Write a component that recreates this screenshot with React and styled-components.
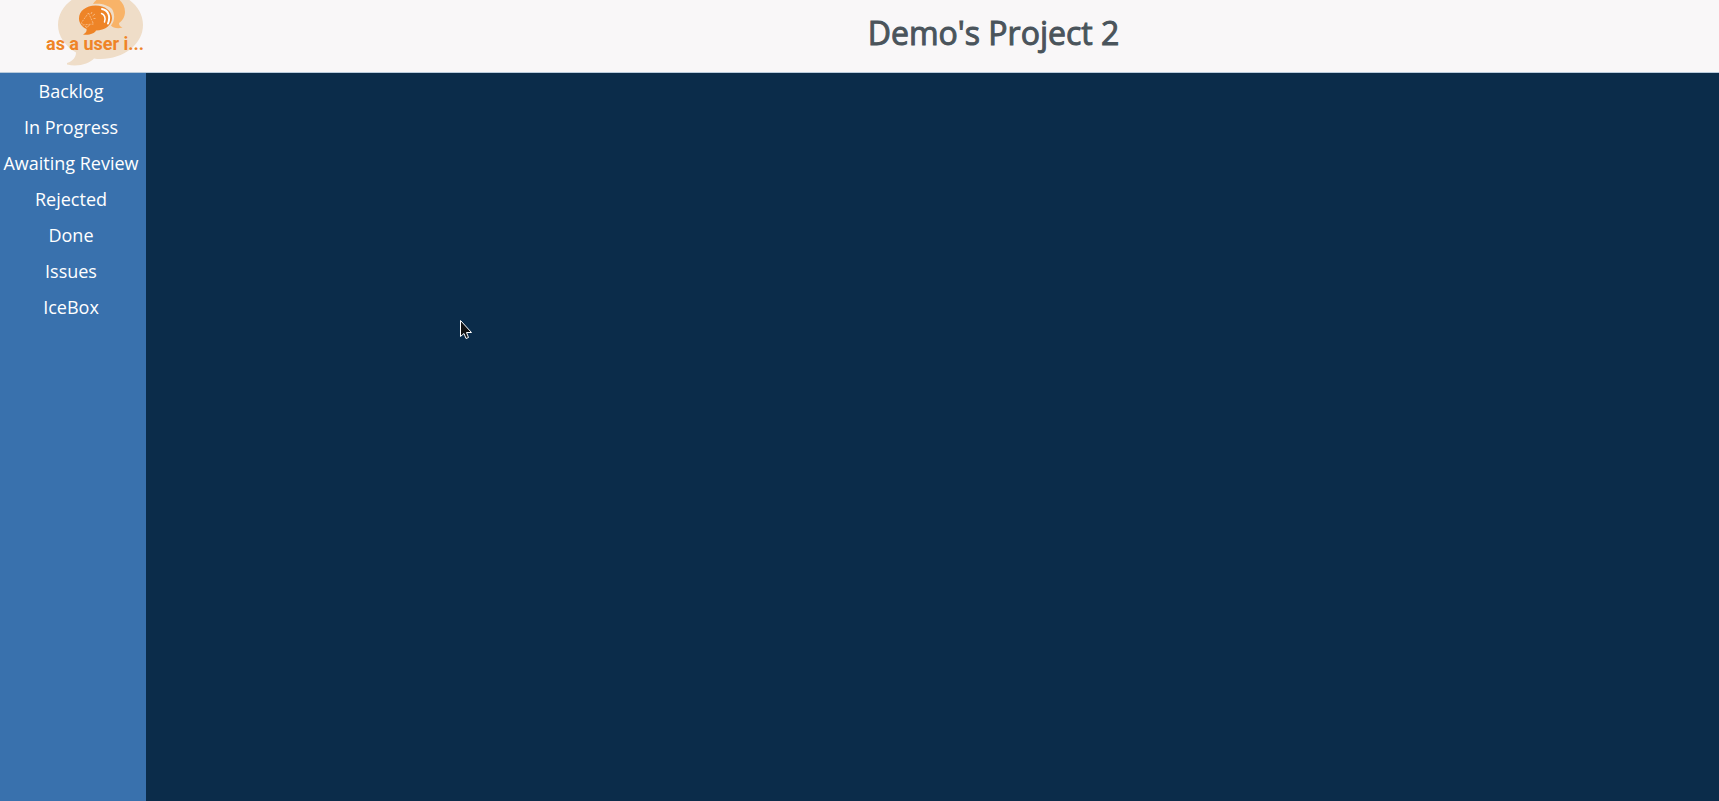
import React from "react";
import styled, { createGlobalStyle } from "styled-components";

const GlobalStyle = createGlobalStyle`
  * { box-sizing: border-box; }
  body { margin: 0; font-family: "Open Sans", sans-serif; }
`;

const Page = styled.div`
  position: relative;
  min-height: 100vh;
  display: flex;
  flex-direction: column;
  background: #0b2c4a;
`;

const Header = styled.header`
  display: flex;
  height: 73px;
  background: #f9f7f8;
  border-bottom: 1px solid #b9cbdc;
`;

const Brand = styled.a`
  flex: 0 0 268px;
  padding-left: 40px;
`;

const LogoSvg = styled.svg`
  display: block;
`;

const Wordmark = styled.text`
  font-family: Roboto, sans-serif;
  font-size: 18px;
  font-weight: 700;
  fill: #ef8427;
`;

const Title = styled.h1`
  flex: 1;
  margin: 0;
  text-align: center;
  color: #4a545b;
  font-size: 32px;
  font-weight: 400;
  line-height: 66px;
  -webkit-text-stroke: 1px #4a545b;
`;

const Body = styled.div`
  flex: 1;
  display: flex;
`;

const Sidebar = styled.nav`
  flex: 0 0 146px;
  padding-right: 4px;
  background: #3971ad;
`;

const SidebarList = styled.ul`
  margin: 0;
  padding: 0;
  list-style: none;
`;

const SidebarButton = styled.button`
  display: block;
  width: 100%;
  height: 36px;
  padding: 0;
  border: 0;
  background: transparent;
  color: #fff;
  font: 400 18px/36px "Open Sans", sans-serif;
  text-align: center;
  white-space: nowrap;
  cursor: pointer;
`;

const Board = styled.main`
  flex: 1;
`;

const Pointer = styled.svg`
  position: absolute;
  left: 459px;
  top: 318px;
  pointer-events: none;
`;

const columns = ["Backlog", "In Progress", "Awaiting Review", "Rejected", "Done", "Issues", "IceBox"];

function Logo() {
  return (
    <LogoSvg width="110" height="72" viewBox="0 0 110 72">
      <path
        fill="#efddc8"
        d="M60.500 -9C84 -9 103 6 103 25S84 59 60.500 59C58 59 56 59 54 58.500C49 64 38 67 27 64.500V63C33 61 36 57 36 52.500C25 46 18 36 18 25C18 6 37 -9 60.500 -9Z"
      />
      <path
        fill="#f8b368"
        d="M53 4C55 0 61 -4 68 -4C78 -4 85 3 85 12C85 17 82 21 79 23C79 25 80 27 82.500 27.500C78 29 73 28 71 25.500C75 21 75 14 72 9C68 5 61 3 53 4Z"
      />
      <path
        fill="#ee8427"
        d="M55.500 5.500C65 5.500 72 11 72 18C72 25 65 30.500 56 30.500C54.500 33.500 49 35.500 43 34.500C46 33 47 31 46.500 29C42 27 39 23 39 18.500C39 11 46 5.500 55.500 5.500Z"
      />
      <g fill="none" stroke="#fff" strokeLinecap="round">
        <path strokeWidth="2" d="M62 9C68 10 71 16 68 23.500" />
        <path strokeWidth="1.500" d="M61.500 13.500C64.500 14.500 66 18 64.500 22" />
      </g>
      <g fill="none" stroke="#f9c493" strokeWidth="0.800">
        <path strokeDasharray="2 1" d="M48.500 13L53.500 24L42.500 25L41.500 22.500Z" />
        <path d="M45 26L47 27.500L49.500 25M51 14L52 12M52.500 16L55 14M53.500 18.500L55.500 18.500" />
      </g>
      <Wordmark x="6" y="50">as a user i...</Wordmark>
    </LogoSvg>
  );
}

export default function App() {
  return (
    <>
      <GlobalStyle />
      <Page>
        <Header>
          <Brand href="#" aria-label="as a user i...">
            <Logo />
          </Brand>
          <Title>Demo's Project 2</Title>
        </Header>
        <Body>
          <Sidebar>
            <SidebarList>
              {columns.map((name) => (
                <li key={name}>
                  <SidebarButton type="button">{name}</SidebarButton>
                </li>
              ))}
            </SidebarList>
          </Sidebar>
          <Board />
        </Body>
        <Pointer width="14" height="23" viewBox="0 0 14 23" aria-hidden="true">
          <path
            d="M1.500 2.500V18.500L5 15.500L7 20.500L9.500 19.500L7.500 14.500H12.500Z"
            fill="#111"
            stroke="#fff"
            strokeWidth="1"
          />
        </Pointer>
      </Page>
    </>
  );
}
